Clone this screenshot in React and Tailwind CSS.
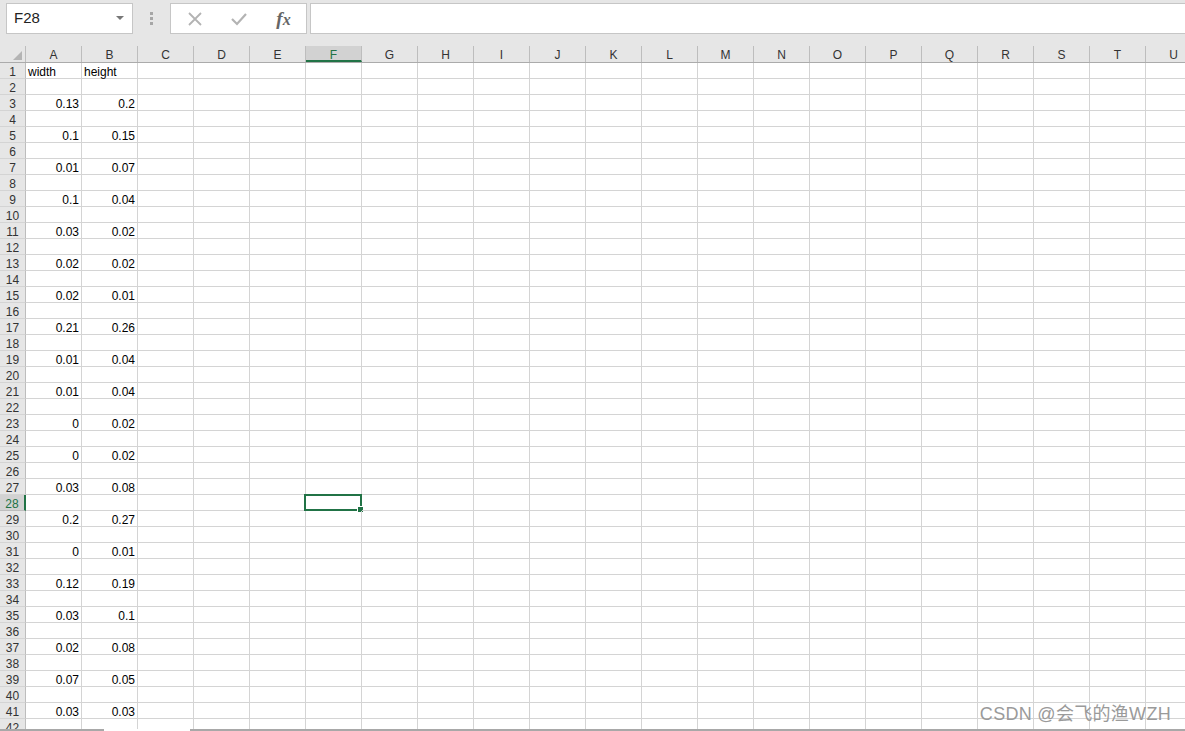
import React from "react";

const cols = "ABCDEFGHIJKLMNOPQRSTU".split("");

const data = {
  1: ["width", "height"],
  3: ["0.13", "0.2"],
  5: ["0.1", "0.15"],
  7: ["0.01", "0.07"],
  9: ["0.1", "0.04"],
  11: ["0.03", "0.02"],
  13: ["0.02", "0.02"],
  15: ["0.02", "0.01"],
  17: ["0.21", "0.26"],
  19: ["0.01", "0.04"],
  21: ["0.01", "0.04"],
  23: ["0", "0.02"],
  25: ["0", "0.02"],
  27: ["0.03", "0.08"],
  29: ["0.2", "0.27"],
  31: ["0", "0.01"],
  33: ["0.12", "0.19"],
  35: ["0.03", "0.1"],
  37: ["0.02", "0.08"],
  39: ["0.07", "0.05"],
  41: ["0.03", "0.03"],
};

const rows = Array.from({ length: 42 }, (_, i) => i + 1);

function FormulaBar() {
  return (
    <div className="h-[46px] bg-[#e6e6e6] flex items-start pt-[3px] pl-[6px] gap-0">
      <div className="w-[127px] h-[31px] bg-white border border-[#c6c6c6] flex items-center justify-between pl-[7px] pr-[8px]">
        <span className="text-[15px] text-[#222]">F28</span>
        <svg width="8" height="5" viewBox="0 0 8 5">
          <path d="M0 0 L8 0 L4 4 Z" fill="#777" />
        </svg>
      </div>
      <div className="w-[37px] h-[31px] flex flex-col items-center justify-center gap-[2px]">
        <span className="w-[3px] h-[3px] bg-[#a6a6a6]" />
        <span className="w-[3px] h-[3px] bg-[#a6a6a6]" />
        <span className="w-[3px] h-[3px] bg-[#a6a6a6]" />
      </div>
      <div className="w-[137px] h-[31px] bg-white border border-[#c6c6c6] flex items-center">
        <div className="w-[45px] flex justify-center pl-[2px]">
          <svg width="16" height="16" viewBox="0 0 16 16">
            <path d="M2 2 L14 14 M14 2 L2 14" stroke="#b3b3b3" strokeWidth="1.8" />
          </svg>
        </div>
        <div className="w-[45px] flex justify-center">
          <svg width="18" height="16" viewBox="0 0 18 16">
            <path d="M2 8 L7 13 L16 3" stroke="#b3b3b3" strokeWidth="2.2" fill="none" />
          </svg>
        </div>
        <div className="w-[45px] flex justify-center">
          <span className="text-[19px] italic font-bold text-[#666] font-['Liberation_Serif',serif] leading-none">
            f<span className="text-[16px]">x</span>
          </span>
        </div>
      </div>
      <div className="ml-[3px] flex-1 h-[31px] bg-white border border-[#c6c6c6] border-r-0" />
    </div>
  );
}

function HeaderRow() {
  return (
    <div className="flex h-[17px] bg-[#e6e6e6] border-b border-[#ababab]">
      <div className="w-[26px] shrink-0 relative border-r border-[#bdbdbd]">
        <svg className="absolute right-[3px] bottom-[2px]" width="9" height="9" viewBox="0 0 9 9">
          <path d="M9 0 L9 9 L0 9 Z" fill="#b4b4b4" />
        </svg>
      </div>
      {cols.map((c) => {
        const sel = c === "F";
        return (
          <div
            key={c}
            className={
              sel
                ? "w-[56px] shrink-0 text-center pt-[2px] leading-[14px] text-[12px] text-[#217346] bg-[#d2d2d2] border-r border-[#bdbdbd] border-b-2 border-b-[#217346]"
                : "w-[56px] shrink-0 text-center pt-[2px] leading-[14px] text-[12px] text-[#333] border-r border-[#bdbdbd]"
            }
          >
            {c}
          </div>
        );
      })}
    </div>
  );
}

function Row({ n }) {
  const vals = data[n];
  const sel = n === 28;
  return (
    <div className="flex h-[16px]">
      <div
        className={
          sel
            ? "w-[26px] shrink-0 bg-[#d2d2d2] text-[#217346] border-r-2 border-r-[#217346] border-b border-b-[#bdbdbd] text-[12px] leading-[12px] pt-[3px] text-center"
            : "w-[26px] shrink-0 bg-[#e6e6e6] text-[#333] border-r border-[#bdbdbd] border-b border-b-[#d4d4d4] text-[12px] leading-[12px] pt-[3px] text-center"
        }
      >
        {n}
      </div>
      {cols.map((c, i) => {
        let text = null;
        let right = false;
        if (vals && i < 2) {
          text = vals[i];
          right = n !== 1;
        }
        return (
          <div
            key={c}
            className={
              "w-[56px] shrink-0 relative border-r border-b border-[#d4d4d4] text-[12px] leading-[12px] pt-[3px] text-black whitespace-nowrap " +
              (right ? "text-right pr-[2px]" : "pl-[2px]")
            }
          >
            {text}
            {sel && c === "F" && (
              <>
                <div className="absolute -left-[2px] -top-[1px] w-[58px] h-[17px] border-2 border-[#217346]" />
                <div className="absolute -right-[3px] -bottom-[3px] w-[5px] h-[5px] bg-[#217346] border border-white box-content" />
              </>
            )}
          </div>
        );
      })}
    </div>
  );
}

export default function App() {
  return (
    <div className="w-[1185px] h-[731px] overflow-hidden bg-white relative font-['Liberation_Sans','Noto_Sans_CJK_SC',sans-serif]">
      <FormulaBar />
      <HeaderRow />
      <div>
        {rows.map((n) => (
          <Row key={n} n={n} />
        ))}
      </div>
      <div className="absolute left-0 bottom-0 w-full h-[2px] flex">
        <div className="w-[104px] bg-[#a8a8a8]" />
        <div className="w-[86px] bg-white" />
        <div className="flex-1 bg-[#a8a8a8]" />
      </div>
      <div className="absolute right-[14px] bottom-[6px] text-[18px] tracking-[0.3px] leading-[22px] text-[#9a9a9a] font-['Liberation_Sans','Noto_Sans_CJK_SC',sans-serif]">
        CSDN @会飞的渔WZH
      </div>
    </div>
  );
}
